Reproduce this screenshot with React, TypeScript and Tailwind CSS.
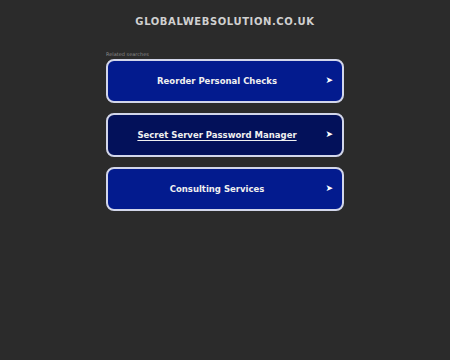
const LINKS = [
  { label: "Reorder Personal Checks", active: false },
  { label: "Secret Server Password Manager", active: true },
  { label: "Consulting Services", active: false },
];

export default function App() {
  return (
    <div
      className="h-[360px] w-[450px] bg-[#2b2b2b] text-white"
      style={{ fontFamily: '"DejaVu Sans", sans-serif' }}
    >
      <div className="pt-[16px] text-center text-[10px] leading-[12px] font-bold tracking-[0.06em] text-[#d0d0d0]">
        GLOBALWEBSOLUTION.CO.UK
      </div>
      <div className="mx-auto mt-[22px] w-[238px]">
        <p className="text-[5px] leading-[8px] text-[#8a8a8a]">Related searches</p>
        <div className="mt-[1px] flex flex-col gap-[10px]">
          {LINKS.map((l) => (
            <div
              key={l.label}
              className={
                "relative flex h-[44px] items-center justify-center rounded-[8px] border-2 border-[#d2d6ea] pr-[16px] " +
                (l.active ? "bg-[#03115a]" : "bg-[#031b8e]")
              }
            >
              <span
                className={
                  "text-[8.5px] font-bold text-[#f0f0f0] " +
                  (l.active ? "underline underline-offset-2" : "")
                }
              >
                {l.label}
              </span>
              <span className="absolute right-[9px] text-[9px] text-white">➤</span>
            </div>
          ))}
        </div>
      </div>
    </div>
  );
}
